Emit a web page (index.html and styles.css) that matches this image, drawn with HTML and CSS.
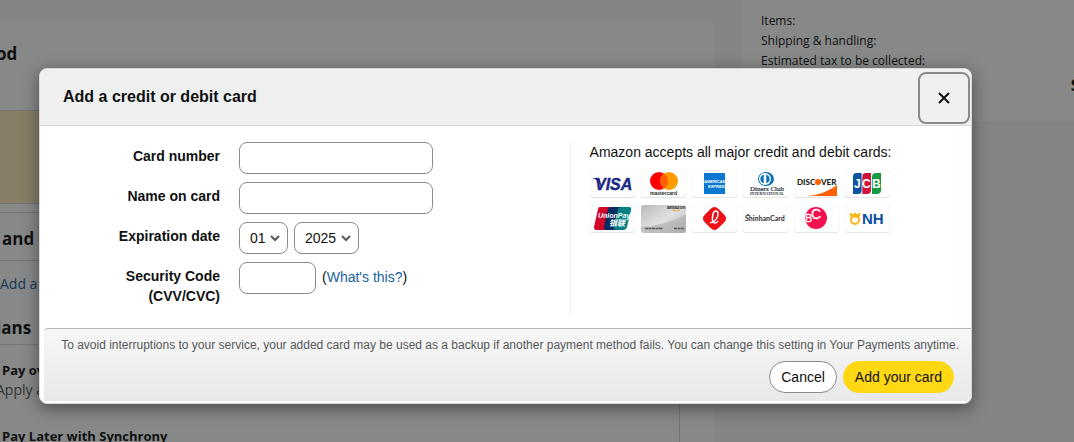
FILE: index.html
```html
<!DOCTYPE html>
<html lang="en">
<head>
  <meta charset="UTF-8">
  <title>Add a credit or debit card</title>
  <meta name="viewport" content="width=device-width, initial-scale=1">
  <link rel="stylesheet" href="styles.css">
</head>
<body>

<div class="page">
  <main class="checkout">
    <h2 class="page-title">od</h2>
    <div class="notice"></div>
    <section class="methods">
      <h3 class="section-title first">and</h3>
      <a class="add-link" href="#">Add a c</a>
      <h3 class="section-title plans">lans</h3>
      <p class="plan-name">Pay ov</p>
      <p class="plan-note">Apply a</p>
      <p class="plan-name later">Pay Later with Synchrony</p>
    </section>
  </main>
  <aside class="summary">
    <p>Items:</p>
    <p>Shipping &amp; handling:</p>
    <p>Estimated tax to be collected:</p>
    <p class="total">$</p>
  </aside>
</div>

<div class="overlay">
  <div class="modal" role="dialog" aria-labelledby="modal-title">
    <header class="modal-header">
      <h1 id="modal-title">Add a credit or debit card</h1>
      <button class="close" type="button" aria-label="Close">
        <svg width="12" height="12" viewBox="0 0 12 12"><path d="M1 1l10 10M11 1L1 11" fill="none" stroke="#0f1111" stroke-width="2"/></svg>
      </button>
    </header>

    <div class="modal-body">
      <form class="card-form" id="card-form">
        <label for="number">Card number</label>
        <input class="field" id="number" type="text">

        <label for="name">Name on card</label>
        <input class="field" id="name" type="text">

        <label for="month">Expiration date</label>
        <div class="controls">
          <div class="select month">
            <select id="month"><option>01</option></select>
            <svg width="10" height="7" viewBox="0 0 10 7"><path d="M1 1l4 4 4-4" fill="none" stroke="#565959" stroke-width="2"/></svg>
          </div>
          <div class="select year">
            <select id="year" aria-label="Expiration year"><option>2025</option></select>
            <svg width="10" height="7" viewBox="0 0 10 7"><path d="M1 1l4 4 4-4" fill="none" stroke="#565959" stroke-width="2"/></svg>
          </div>
        </div>

        <label for="cvv">Security Code (CVV/CVC)</label>
        <div class="controls">
          <input class="field cvv" id="cvv" type="text">
          <span>(<a href="#">What's this?</a>)</span>
        </div>
      </form>

      <div class="accepted">
        <p>Amazon accepts all major credit and debit cards:</p>
        <div class="brands">
          <!-- Visa -->
          <svg class="brand" viewBox="0 0 45 28">
            <text x="5" y="20" font-size="16" font-weight="bold" font-style="italic" fill="#1a2a86" stroke="#1a2a86" stroke-width=".4">VISA</text>
            <path d="M2 8h6q2 0 2 2l2 8C9 13 7 9 2 8z" fill="#1a2a86"/>
          </svg>
          <!-- Mastercard -->
          <svg class="brand" viewBox="0 0 45 28">
            <circle cx="18" cy="11" r="9" fill="#ff0000"/>
            <circle cx="28" cy="11" r="9" fill="#ff9a00"/>
            <path d="M23 3.500a9 9 0 0 1 0 15a9 9 0 0 1 0-15z" fill="#ff5f00"/>
            <text x="9" y="25" font-size="5" font-weight="bold" fill="#231f20">mastercard</text>
          </svg>
          <!-- American Express -->
          <svg class="brand" viewBox="0 0 45 28">
            <path d="M12 3h21v21H12z" fill="#0a78cf"/>
            <text x="12" y="13" font-size="4" font-weight="bold" fill="#fff">AMERICAN</text>
            <text x="16" y="18" font-size="4" font-weight="bold" fill="#fff">EXPRESS</text>
          </svg>
          <!-- Diners Club -->
          <svg class="brand serif" viewBox="0 0 45 28">
            <ellipse cx="23" cy="9" rx="8" ry="7" fill="#0a72ba"/>
            <circle cx="22" cy="9" r="6" fill="#fff"/>
            <path d="M20.500 5v8a4.200 4.200 0 0 1 0-8zM23.500 5v8a4.200 4.200 0 0 0 0-8z" fill="#0a72ba" stroke="#0a72ba" stroke-width=".5"/>
            <text x="7" y="21" font-size="7" fill="#222b38" stroke="#222b38" stroke-width=".2">Diners Club</text>
            <text x="7" y="25" font-size="4" font-weight="bold" fill="#222b38">INTERNATIONAL</text>
          </svg>
          <!-- Discover -->
          <svg class="brand" viewBox="0 0 45 28">
            <path d="M14 26c11-1 21-5 29-11v11z" fill="#ff6000"/>
            <text class="rounded" x="3" y="15" font-size="8" font-weight="900" fill="#231f20">DISC</text>
            <circle cx="24" cy="12" r="3" fill="#ff6000"/>
            <text class="rounded" x="27" y="15" font-size="8" font-weight="900" fill="#231f20">VER</text>
          </svg>
          <!-- JCB -->
          <svg class="brand" viewBox="0 0 45 28">
            <path d="M11 3h6v17q0 4-4 4H8V7q0-4 3-4z" fill="#10539f"/>
            <path d="M21 3h5v17q0 4-4 4h-5V7q0-4 4-4z" fill="#cf1238"/>
            <path d="M31 3h5v17q0 4-4 4h-5V7q0-4 4-4z" fill="#129b3e"/>
            <path d="M17 3v21M26.500 3v21" stroke="#fff" stroke-width=".7"/>
            <text x="9" y="18" font-size="12" font-weight="bold" fill="#fff">J</text>
            <text x="17" y="18" font-size="12" font-weight="bold" fill="#fff">C</text>
            <text x="27" y="18" font-size="12" font-weight="bold" fill="#fff">B</text>
          </svg>
          <!-- UnionPay -->
          <svg class="brand" viewBox="0 0 45 28">
            <path d="M10 2h11l-5 23H6q-2 0-2-3l4-18q0-2 2-2z" fill="#d10429"/>
            <path d="M21 2h11l-5 23H16q-2 0-2-3l4-18q1-2 3-2z" fill="#022e64"/>
            <path d="M31 2h8q3 0 2 3l-4 17q-1 3-3 3h-9q-1 0-1-3l4-18q1-2 3-2z" fill="#077f84"/>
            <text x="8" y="13" font-size="7" font-weight="bold" font-style="italic" fill="#fff">UnionPay</text>
            <text x="19" y="21" font-size="8" font-weight="bold" font-style="italic" fill="#fff">银联</text>
          </svg>
          <!-- Store card -->
          <svg class="brand" viewBox="0 0 45 28">
            <defs><linearGradient id="silver" x2="1" y2="1"><stop stop-color="#b8b9ba"/><stop offset=".5" stop-color="#e0e0e0"/><stop offset="1" stop-color="#b3b4b5"/></linearGradient></defs>
            <path d="M0 0h45v28H0z" fill="url(#silver)"/>
            <path d="M0 22C15 21 32 17 45 9v19H0z" fill="#a4a6a8" opacity=".5"/>
            <text x="26" y="4" font-size="5" font-weight="bold" fill="#222">amazon</text>
            <path d="M31 5q5 2 8 0" fill="none" stroke="#f0a13a"/>
            <path d="M4 23.500h18M33 23.500h10" stroke="#555b60" stroke-width="1.500" stroke-dasharray="3 .5"/>
          </svg>
          <!-- Lotte -->
          <svg class="brand" viewBox="0 0 45 28">
            <path d="M18.500 4q4-4 8 0l5.500 5.500q4 4 0 8L26.500 23q-4 4-8 0L13 17.500q-4-4 0-8z" fill="#ed1117"/>
            <path d="M18 18c5-1 8-5 8-9s-4-4-5 0c-1 5-1 9 2 9q2 0 3-2" fill="none" stroke="#fff" stroke-width="1.500"/>
          </svg>
          <!-- Shinhan -->
          <svg class="brand" viewBox="0 0 45 28">
            <text class="rounded" x="2" y="16" font-size="7" font-weight="900" fill="#3f4247">ShinhanCard</text>
            <circle cx="5" cy="10" r="1" fill="#3f4247"/>
          </svg>
          <!-- BC -->
          <svg class="brand" viewBox="0 0 45 28">
            <circle cx="22" cy="13" r="11" fill="#f4114f"/>
            <text x="11" y="17" font-size="11" fill="#fff" stroke="#fff" stroke-width=".3">B</text>
            <text x="17" y="14" font-size="14" fill="#fff" stroke="#fff" stroke-width=".3">C</text>
          </svg>
          <!-- NH -->
          <svg class="brand" viewBox="0 0 45 28">
            <circle cx="10" cy="15" r="4" fill="none" stroke="#fbb616" stroke-width="2"/>
            <path d="M5 8l3 2 2-2 2 2 3-2-1 4H6z" fill="#fbb616" stroke="#fbb616"/>
            <text x="17" y="19" font-size="15" font-weight="bold" fill="#0b4ea2">NH</text>
          </svg>
        </div>
      </div>
    </div>

    <footer class="modal-footer">
      <p>To avoid interruptions to your service, your added card may be used as a backup if another payment method fails. You can change this setting in Your Payments anytime.</p>
      <div class="actions">
        <button class="button" type="button">Cancel</button>
        <button class="button primary" type="submit" form="card-form">Add your card</button>
      </div>
    </footer>
  </div>
</div>

</body>
</html>
```

FILE: styles.css
```css
* {
  box-sizing: border-box;
}

body {
  margin: 0;
  height: 100vh;
  overflow: hidden;
  background: #f7f8f8;
  color: #0f1111;
  font-family: "Liberation Sans", Arial, "Noto Sans CJK SC", sans-serif;
  font-size: 14px;
  line-height: 20px;
}

h1, h2, h3, p {
  margin: 0;
}

a {
  color: #2162a1;
  text-decoration: none;
}

/* Checkout page under the dialog */
.page {
  display: flex;
  gap: 27px;
  align-items: flex-start;
  font-family: "Open Sans", "Noto Sans", sans-serif;
}

.checkout {
  flex: 1;
  margin-top: 22px;
  padding-right: 34px;
  background: #fff;
}

.page-title {
  padding: 20px 0 44px;
  font-size: 17px;
  line-height: 24px;
  text-indent: -4px;
}

.notice {
  height: 94px;
  border: 1px solid #d5d9d9;
  border-width: 1px 0;
  background: #ffeaba;
}

.methods {
  margin-top: 8px;
  border: 1px solid #d5d9d9;
  border-width: 1px 1px 0 0;
}

.section-title {
  padding-bottom: 8px;
  border-bottom: 1px solid #d5d9d9;
  font-size: 17px;
  line-height: 24px;
}

.section-title.first {
  padding: 14px 0 9px 2px;
}

.add-link {
  display: block;
  padding: 13px 0 22px;
}

.section-title.plans {
  padding-bottom: 4px;
  text-indent: -4px;
}

.plan-name {
  padding: 15px 0 0 2px;
  font-size: 13px;
  font-weight: bold;
}

.plan-note {
  color: #565959;
  text-indent: -4px;
}

.plan-name.later {
  padding-top: 26px;
}

.summary {
  width: 333px;
  padding: 11px 0 26px 20px;
  background: #fff;
  font-size: 12px;
  overflow: hidden;
}

.total {
  margin: 4px -7px 0 0;
  text-align: right;
  font-size: 18px;
  font-weight: bold;
}

/* Dialog */
.overlay {
  position: absolute;
  inset: 0;
  padding: 68px 102px 38px 39px;
  background: rgba(15, 17, 17, 0.5);
}

.modal {
  padding-bottom: 2px;
  border: 1px solid #d5d9d9;
  border-radius: 8px;
  background: #fff;
  box-shadow: 0 4px 16px rgba(15, 17, 17, 0.5);
  overflow: hidden;
}

.modal-header {
  display: flex;
  align-items: center;
  justify-content: space-between;
  height: 57px;
  padding: 3px 1px 1px 23px;
  border-bottom: 1px solid #d5d9d9;
  background: #eff1f1;
}

.modal-header h1 {
  padding-bottom: 2px;
  font-size: 16px;
  line-height: 24px;
}

.close {
  display: grid;
  place-items: center;
  width: 52px;
  height: 52px;
  border: 2px solid #888c8c;
  border-radius: 8px;
  background: transparent;
}

.modal-body {
  display: grid;
  grid-template-columns: 53fr 40fr;
  padding: 16px 0 13px;
}

/* Card form */
.card-form {
  display: grid;
  grid-template-columns: 106px 194px;
  justify-content: start;
  gap: 8px 19px;
  padding: 0 0 9px 74px;
  border-right: 1px solid #eee;
}

.card-form label {
  padding-top: 4px;
  font-weight: bold;
  text-align: right;
}

.field {
  width: 100%;
  height: 32px;
  padding: 0 8px;
  border: 1px solid #888c8c;
  border-radius: 8px;
  background: #fff;
  font: inherit;
}

.field.cvv {
  width: 77px;
}

.controls {
  display: flex;
  gap: 6px;
}

.controls span {
  padding-top: 5px;
}

.select {
  display: grid;
  align-items: center;
}

.select select,
.select svg {
  grid-area: 1 / 1;
}

.select select {
  appearance: none;
  height: 32px;
  padding: 0 10px;
  border: 1px solid #888c8c;
  border-radius: 8px;
  background: #fff;
  color: inherit;
  font: inherit;
}

.select svg {
  justify-self: end;
  margin-right: 8px;
  pointer-events: none;
}

.month {
  width: 49px;
}

.year {
  width: 65px;
}

/* Accepted cards */
.accepted {
  padding-left: 19px;
}

.brands {
  display: grid;
  grid-template-columns: repeat(6, 45px);
  gap: 7px 6px;
  margin-top: 8px;
}

.brand {
  width: 45px;
  height: 28px;
  border-radius: 3px;
  box-shadow: inset 0 -1px 1px #e3e3e3, inset 0 0 1px #ddd;
}

.serif {
  font-family: "Liberation Serif", "Times New Roman", serif;
}

.rounded {
  font-family: Lato, sans-serif;
}

/* Footer */
.modal-footer {
  margin-left: 4px;
  padding: 6px 12px 8px;
  border-top: 1px solid #b5b8b8;
  border-radius: 4px 0 0 0;
  background: linear-gradient(#f7f7f7, #e8e8e8);
}

.modal-footer p {
  color: #565959;
  font-size: 12px;
  text-align: right;
}

.actions {
  display: flex;
  justify-content: flex-end;
  gap: 6px;
  padding: 6px 5px 0 0;
}

.button {
  height: 32px;
  padding: 0 11px;
  border: 1px solid #888c8c;
  border-radius: 16px;
  background: #fff;
  color: #0f1111;
  font: inherit;
}

.button.primary {
  border-color: #ffd814;
  background: #ffd814;
}
```
